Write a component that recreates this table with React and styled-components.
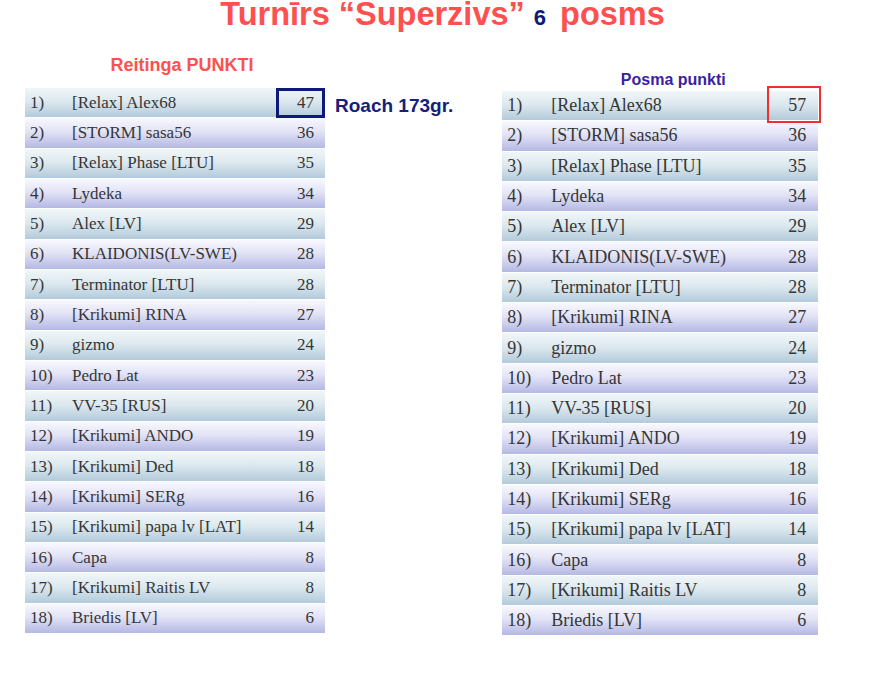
import React from "react";
import styled, { createGlobalStyle, css } from "styled-components";

const Global = createGlobalStyle`
  html, body { margin: 0; padding: 0; background: #ffffff; }
  body { width: 870px; height: 694px; overflow: hidden; font-family: "Liberation Serif", "Times New Roman", serif; }
`;

const rating = [
  ["[Relax] Alex68", 47],
  ["[STORM] sasa56", 36],
  ["[Relax] Phase [LTU]", 35],
  ["Lydeka", 34],
  ["Alex [LV]", 29],
  ["KLAIDONIS(LV-SWE)", 28],
  ["Terminator [LTU]", 28],
  ["[Krikumi] RINA", 27],
  ["gizmo", 24],
  ["Pedro Lat", 23],
  ["VV-35 [RUS]", 20],
  ["[Krikumi] ANDO", 19],
  ["[Krikumi] Ded", 18],
  ["[Krikumi] SERg", 16],
  ["[Krikumi] papa lv [LAT]", 14],
  ["Capa", 8],
  ["[Krikumi] Raitis LV", 8],
  ["Briedis [LV]", 6],
];

const stage = rating.map(([n, s], i) => [n, i === 0 ? 57 : s]);

const Page = styled.div`
  width: 870px;
  height: 694px;
  display: flex;
  flex-direction: column;
`;

const Title = styled.h1`
  margin: -4.5px 0 0;
  padding-left: 15px;
  height: 37px;
  line-height: 37px;
  text-align: center;
  font-family: "Liberation Sans", Arial, sans-serif;
  font-weight: bold;
  font-size: 32.5px;
  color: #ff4f4f;
  white-space: nowrap;
`;

const Stage = styled.span`
  font-size: 22px;
  line-height: 0;
  color: #0b1a78;
  margin: 0 14px 0 9px;
`;

const Columns = styled.div`
  display: flex;
  align-items: flex-start;
  padding-left: 25px;
`;

const Column = styled.section`
  display: flex;
  flex-direction: column;
  width: ${(p) => p.$width}px;
  margin-left: ${(p) => p.$offset || 0}px;
`;

const Heading = styled.h2`
  margin: ${(p) => p.$top}px 0 ${(p) => p.$bottom}px;
  padding-left: ${(p) => p.$shift}px;
  text-align: center;
  font-family: "Liberation Sans", Arial, sans-serif;
  font-weight: bold;
  font-size: ${(p) => p.$size}px;
  line-height: ${(p) => p.$lh}px;
  color: ${(p) => p.$color};
  white-space: nowrap;
`;

const Note = styled.div`
  margin: 62.5px 0 0 10px;
  font-family: "Liberation Sans", Arial, sans-serif;
  font-weight: bold;
  font-size: 19px;
  line-height: 22px;
  color: #14207e;
  white-space: nowrap;
`;

const Table = styled.div`
  display: flex;
  flex-direction: column;
  gap: 1px;
`;

const odd = css`
  background: linear-gradient(180deg, #f0f6f8 0%, #dde9ef 45%, #b3cadb 100%);
`;
const even = css`
  background: linear-gradient(180deg, #f8f8fe 0%, #e2e3f6 45%, #b5b8e4 100%);
`;

const Row = styled.div`
  position: relative;
  display: grid;
  grid-template-columns: ${(p) => p.$num}px 1fr auto;
  align-items: center;
  height: ${(p) => p.$h}px;
  padding: 0 ${(p) => p.$pr}px 0 5px;
  font-size: ${(p) => p.$fs}px;
  color: #363636;
  white-space: nowrap;
  z-index: ${(p) => (p.$first ? 1 : 0)};
  ${(p) => (p.$odd ? odd : even)}
`;

const Score = styled.span`
  text-align: right;
`;

const Highlight = styled.div`
  position: absolute;
  left: ${(p) => p.$left}px;
  top: ${(p) => p.$top}px;
  width: ${(p) => p.$w}px;
  height: ${(p) => p.$hh}px;
  box-sizing: border-box;
  border: ${(p) => p.$bw}px solid ${(p) => p.$color};
  pointer-events: none;
`;

function Ranking({ data, num, fs, pr, h, box }) {
  return (
    <Table>
      {data.map(([name, score], i) => (
        <Row key={i} $first={i === 0} $odd={i % 2 === 0} $num={num} $fs={fs} $pr={pr} $h={h}>
          <span>{i + 1})</span>
          <span>{name}</span>
          <Score>{score}</Score>
          {i === 0 && box}
        </Row>
      ))}
    </Table>
  );
}

export default function App() {
  return (
    <>
      <Global />
      <Page>
        <Title>
          Turnīrs “Superzivs”<Stage>6</Stage>posms
        </Title>
        <Columns>
          <Column $width={300}>
            <Heading $top={22.5} $bottom={13} $shift={14} $size={18} $lh={20} $color="#ff4f4f">
              Reitinga PUNKTI
            </Heading>
            <Ranking
              data={rating}
              num={42}
              fs={17}
              pr={11}
              h={29.33}
              box={<Highlight $left={251} $top={0} $w={49} $hh={30} $bw={3} $color="#0d1a7a" />}
            />
          </Column>
          <Note>Roach 173gr.</Note>
          <Column $width={316} $offset={49}>
            <Heading $top={38.5} $bottom={2} $shift={26} $size={16} $lh={18} $color="#3b1fa3">
              Posma punkti
            </Heading>
            <Ranking
              data={stage}
              num={44}
              fs={18}
              pr={12}
              h={29.3}
              box={<Highlight $left={265} $top={-5} $w={54} $hh={37} $bw={2} $color="#f03030" />}
            />
          </Column>
        </Columns>
      </Page>
    </>
  );
}
